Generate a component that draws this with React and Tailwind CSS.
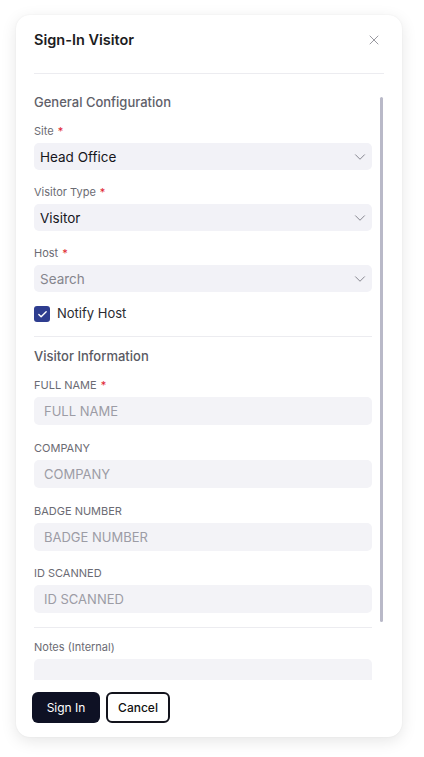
import React from "react";
import { ChevronDown, X, Check } from "lucide-react";

function Label({ text, required }) {
  return (
    <div className="h-4 text-[11px] leading-4 text-[#6b6b73]">
      {text}
      {required && <span className="ml-[4px] text-[#e0242e]">*</span>}
    </div>
  );
}

function SelectBox({ value, placeholder }) {
  return (
    <div className="mt-1 flex h-[27px] items-center justify-between rounded-[5px] bg-[#f2f2f7] pl-[6px] pr-[3px]">
      <span className={"pt-[1px] text-[13.5px] " + (placeholder ? "text-[#85858d]" : "text-[#16161d]")}>{value}</span>
      <ChevronDown size={18} strokeWidth={1.2} className="text-[#7a7a84]" />
    </div>
  );
}

function InputBox({ placeholder }) {
  return (
    <div className="mt-1 flex h-[28px] items-center rounded-[5px] bg-[#f3f3f7] pl-[10px]">
      <span className="pt-[1px] text-[13px] text-[#9c9ca5]">{placeholder}</span>
    </div>
  );
}

export default function App() {
  return (
    <div className="min-h-[757px] bg-white pt-[15px] pl-4" style={{ fontFamily: "Inter, 'Noto Sans', sans-serif" }}>
      <div className="flex h-[722px] w-[386px] flex-col overflow-hidden rounded-[14px] bg-white shadow-[0_4px_16px_rgba(0,0,0,0.10),0_0_2px_rgba(0,0,0,0.06)]">
        <div className="mx-[18px] flex h-[59px] shrink-0 items-start justify-between border-b border-[#ececf0] pt-[14px]">
          <div className="text-[14.5px] font-semibold leading-[22px] text-[#1c1c22]">Sign-In Visitor</div>
          <X size={16} strokeWidth={1.3} className="mr-[2px] mt-[3px] text-[#8a8a92]" />
        </div>
        <div className="relative h-[606px] shrink-0 overflow-hidden pl-[18px] pr-[30px]">
          <div className="absolute left-[364px] top-[23px] h-[525px] w-[3px] rounded-full bg-[#b9b9c8]" />
          <div className="pt-[19px] text-[13px] font-medium leading-[18px] text-[#606069]">General Configuration</div>
          <div className="mt-[12px]">
            <Label text="Site" required />
            <SelectBox value="Head Office" />
          </div>
          <div className="mt-[14px]">
            <Label text="Visitor Type" required />
            <SelectBox value="Visitor" />
          </div>
          <div className="mt-[14px]">
            <Label text="Host" required />
            <SelectBox value="Search" placeholder />
          </div>
          <div className="mt-[14px] flex h-4 items-center gap-[7px]">
            <div className="flex h-4 w-4 items-center justify-center rounded-[3px] bg-[#2e3d8f]">
              <Check size={11} strokeWidth={3} className="text-white" />
            </div>
            <span className="text-[13px] text-[#2a2a30]">Notify Host</span>
          </div>
          <div className="mt-[14px] border-t border-[#ececf0]" />
          <div className="mt-[9px] text-[13px] font-medium leading-5 text-[#5a5a63]">Visitor Information</div>
          <div className="mt-[11px]">
            <Label text="FULL NAME" required />
            <InputBox placeholder="FULL NAME" />
          </div>
          <div className="mt-[15px]">
            <Label text="COMPANY" />
            <InputBox placeholder="COMPANY" />
          </div>
          <div className="mt-[15px]">
            <Label text="BADGE NUMBER" />
            <InputBox placeholder="BADGE NUMBER" />
          </div>
          <div className="mt-[14px]">
            <Label text="ID SCANNED" />
            <InputBox placeholder="ID SCANNED" />
          </div>
          <div className="mt-[14px] border-t border-[#ececf0]" />
          <div className="mt-[11px]">
            <Label text="Notes (Internal)" />
            <div className="mt-1 h-[80px] rounded-[5px] bg-[#f3f3f7]" />
          </div>
        </div>
        <div className="flex shrink-0 gap-[6px] pl-4 pt-[12px]">
          <button className="flex h-[31px] w-[68px] items-center justify-center rounded-[6px] bg-[#0e1124] text-[12px] text-white">
            Sign In
          </button>
          <button className="flex h-[31px] w-[64px] items-center justify-center rounded-[6px] border-2 border-[#12131c] bg-white text-[12px] font-medium text-[#111]">
            Cancel
          </button>
        </div>
      </div>
    </div>
  );
}
